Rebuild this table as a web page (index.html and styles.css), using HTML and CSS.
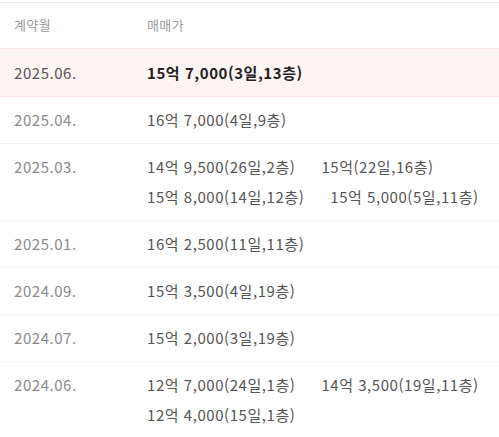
FILE: index.html
```html
<!DOCTYPE html>
<html lang="ko">
<head>
<meta charset="utf-8">
<link rel="stylesheet" href="styles.css">
</head>
<body>
<div class="table">
  <div class="row head">
    <div class="date">계약월</div>
    <div class="price">매매가</div>
  </div>
  <div class="row hl">
    <div class="date">2025.06.</div>
    <div class="price"><span class="item">15억 7,000(3일,13층)</span></div>
  </div>
  <div class="row">
    <div class="date">2025.04.</div>
    <div class="price"><span class="item">16억 7,000(4일,9층)</span></div>
  </div>
  <div class="row">
    <div class="date">2025.03.</div>
    <div class="price">
      <span class="item">14억 9,500(26일,2층)</span>
      <span class="item">15억(22일,16층)</span>
      <span class="item">15억 8,000(14일,12층)</span>
      <span class="item">15억 5,000(5일,11층)</span>
    </div>
  </div>
  <div class="row">
    <div class="date">2025.01.</div>
    <div class="price"><span class="item">16억 2,500(11일,11층)</span></div>
  </div>
  <div class="row">
    <div class="date">2024.09.</div>
    <div class="price"><span class="item">15억 3,500(4일,19층)</span></div>
  </div>
  <div class="row">
    <div class="date">2024.07.</div>
    <div class="price"><span class="item">15억 2,000(3일,19층)</span></div>
  </div>
  <div class="row">
    <div class="date">2024.06.</div>
    <div class="price">
      <span class="item">12억 7,000(24일,1층)</span>
      <span class="item">14억 3,500(19일,11층)</span>
      <span class="item">12억 4,000(15일,1층)</span>
    </div>
  </div>
</div>
</body>
</html>
```

FILE: styles.css
```css
html, body {
  margin: 0;
  padding: 0;
  background: #fff;
}
body {
  font-family: "Noto Sans CJK KR", "Noto Sans", sans-serif;
  font-size: 15px;
  letter-spacing: 0.55px;
  padding-top: 2px;
}
.table {
  border-top: 1px solid #e6e6e6;
}
.row {
  display: flex;
  padding: 11px 0 11px 14px;
  line-height: 24px;
  border-top: 1px solid #f0f0f0;
}
.row.head {
  border-top: none;
  padding: 10px 0 11px 14px;
}
.row.head .date, .row.head .price {
  color: #9a9a9a;
  font-size: 13px;
  letter-spacing: 0.4px;
}
.date {
  width: 133px;
  flex: none;
  color: #8a8a8a;
}
.price {
  flex: 1;
  display: flex;
  flex-wrap: wrap;
  row-gap: 6px;
  column-gap: 26px;
  color: #555;
}
.item {
  white-space: nowrap;
}
.row.hl {
  background: #fff4f4;
  border-top-color: #fde6e6;
  border-bottom: 1px solid #fde6e6;
  padding: 12px 0 11px 14px;
}
.row.hl + .row {
  border-top: none;
}
.row.hl .date {
  color: #555;
}
.row.hl .price {
  color: #222;
  font-weight: bold;
}
```
